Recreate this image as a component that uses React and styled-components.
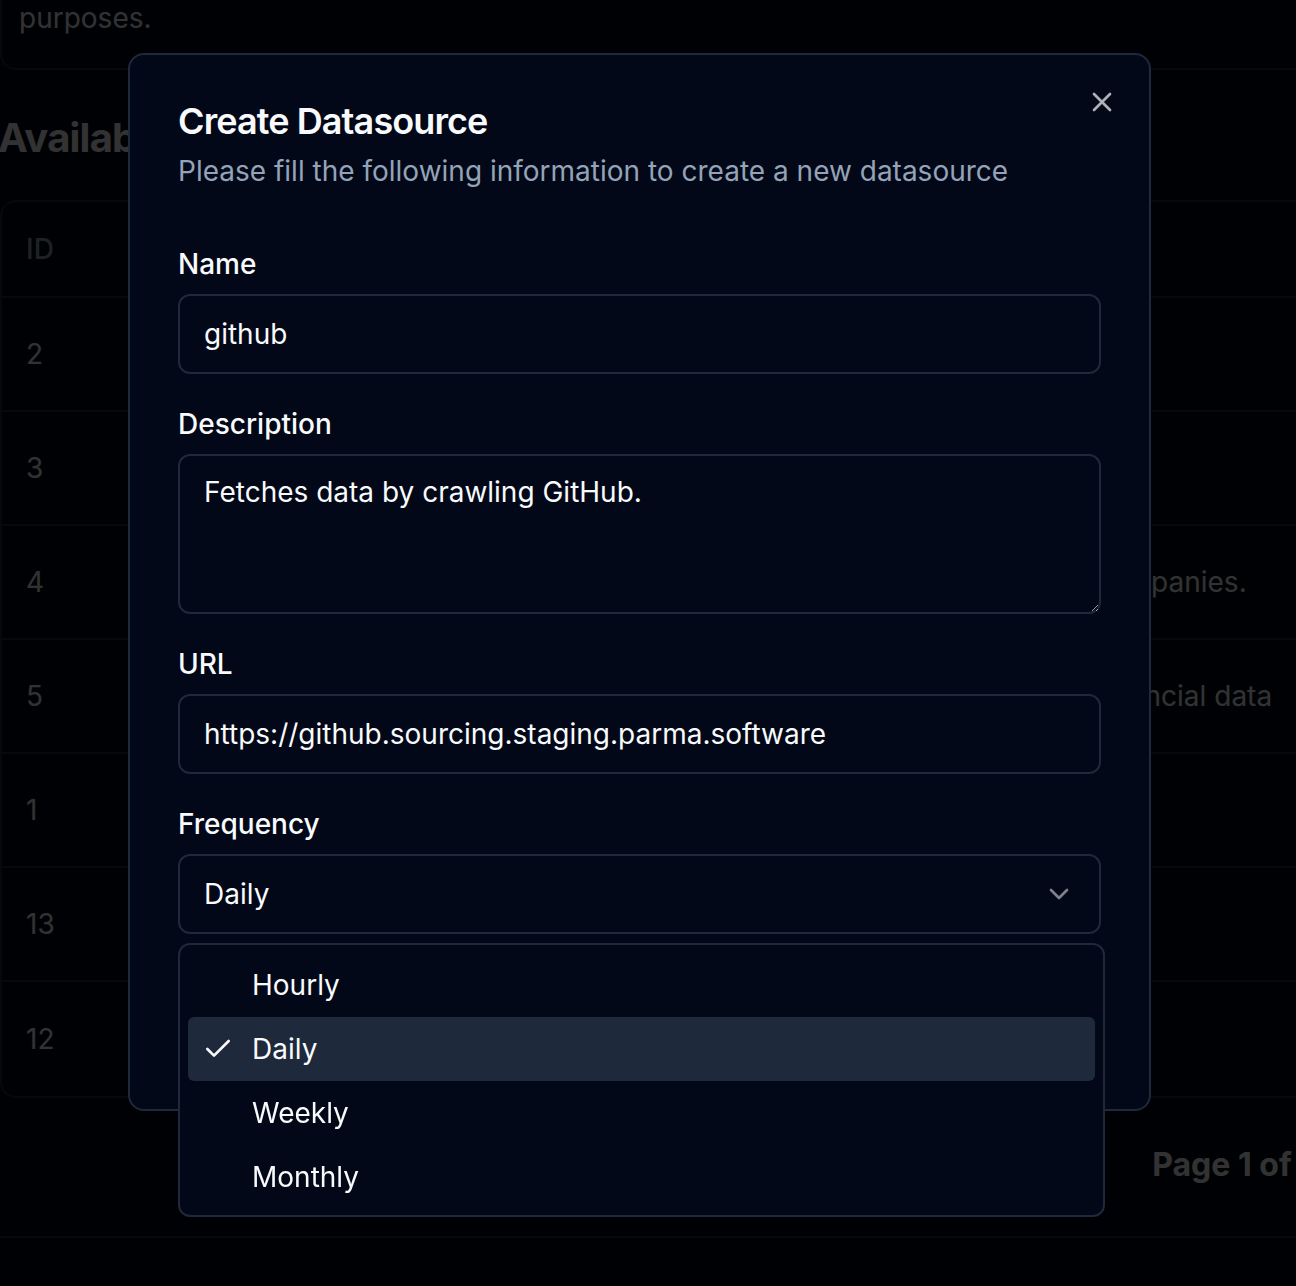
import React from "react";
import styled, { createGlobalStyle } from "styled-components";
import { X, ChevronDown, Check } from "lucide-react";

const colors = {
  background: "#020817",
  foreground: "#f8fafc",
  muted: "#94a3b8",
  border: "#1e293b",
  accent: "#1e293b",
};

const GlobalStyle = createGlobalStyle`
  html, body { margin: 0; padding: 0; }
  body {
    background: ${colors.background};
    color: ${colors.foreground};
    font-family: Inter, "Noto Sans", "Liberation Sans", sans-serif;
    overflow: hidden;
    height: 1286px;
  }
  * { box-sizing: border-box; }
`;

/* ---------- page behind the dialog ---------- */

const Page = styled.div`
  width: 1340px;
  display: flex;
  flex-direction: column;
`;

const TopCard = styled.div`
  margin-top: -44px;
  padding: 0 17px 30px;
  border: 2px solid ${colors.border};
  border-top-color: transparent;
  border-radius: 0 0 16px 16px;
  font-size: 28px;
  line-height: 40px;
`;

const Heading = styled.h2`
  margin: 48px 0 0 -2px;
  font-size: 40px;
  line-height: 40px;
  font-weight: 700;
  letter-spacing: -0.02em;
`;

const TableCard = styled.div`
  margin-top: 42px;
  border: 2px solid ${colors.border};
  border-radius: 16px;
`;

const Row = styled.div`
  display: grid;
  grid-template-columns: 200px 457px 1fr;
  align-items: center;
  height: ${(p) => (p.$header ? "96px" : "114px")};
  border-bottom: ${(p) => (p.$last ? "none" : `2px solid ${colors.border}`)};
  font-size: 28px;
  color: ${(p) => (p.$header ? colors.muted : colors.foreground)};
  font-weight: ${(p) => (p.$header ? 500 : 400)};
`;

const Cell = styled.div`
  padding-left: ${(p) => (p.$first ? "24px" : "0")};
  white-space: nowrap;
`;

const Pager = styled.div`
  margin-top: 47px;
  display: flex;
  justify-content: flex-end;
  padding-right: 27px;
  font-size: 32px;
  line-height: 40px;
  font-weight: 700;
`;

const BottomRule = styled.div`
  margin-top: 51px;
  border-top: 2px solid ${colors.border};
  height: 60px;
`;

/* ---------- overlay + dialog ---------- */

const Overlay = styled.div`
  position: fixed;
  inset: 0;
  background: rgba(0, 0, 0, 0.8);
  z-index: 10;
`;

const Dialog = styled.div`
  position: fixed;
  left: 128px;
  top: 53px;
  width: 1023px;
  z-index: 20;
  background: ${colors.background};
  border: 2px solid ${colors.border};
  border-radius: 16px;
  padding: 48px;
  display: flex;
  flex-direction: column;
`;

const CloseButton = styled.button`
  position: absolute;
  top: 31px;
  right: 31px;
  width: 32px;
  height: 32px;
  padding: 0;
  border: none;
  background: none;
  color: ${colors.foreground};
  opacity: 0.7;
  display: flex;
  align-items: center;
  justify-content: center;
`;

const Title = styled.h2`
  margin: 0;
  font-size: 36px;
  line-height: 36px;
  font-weight: 600;
  letter-spacing: -0.025em;
`;

const Subtitle = styled.p`
  margin: 12px 0 0;
  font-size: 28px;
  line-height: 40px;
  color: ${colors.muted};
`;

const Form = styled.form`
  margin-top: 59px;
  display: flex;
  flex-direction: column;
  gap: 36px;
`;

const Field = styled.div`
  position: relative;
  display: flex;
  flex-direction: column;
  gap: 16px;
`;

const Label = styled.label`
  font-size: 28px;
  line-height: 28px;
  font-weight: 500;
`;

const Input = styled.input`
  height: 80px;
  width: 100%;
  padding: 0 24px;
  border: 2px solid ${colors.border};
  border-radius: 12px;
  background: ${colors.background};
  color: ${colors.foreground};
  font: inherit;
  font-size: 28px;
  outline: none;
`;

const TextArea = styled.textarea`
  height: 160px;
  width: 100%;
  padding: 16px 24px;
  border: 2px solid ${colors.border};
  border-radius: 12px;
  background: ${colors.background};
  color: ${colors.foreground};
  font: inherit;
  font-size: 28px;
  line-height: 40px;
  outline: none;
  resize: vertical;
  color-scheme: dark;
`;

const SelectTrigger = styled.div`
  height: 80px;
  padding: 0 24px;
  border: 2px solid ${colors.border};
  border-radius: 12px;
  display: flex;
  align-items: center;
  justify-content: space-between;
  font-size: 28px;
  svg { opacity: 0.5; }
`;

const Menu = styled.div`
  position: absolute;
  top: calc(100% + 9px);
  left: 0;
  width: calc(100% + 4px);
  padding: 8px 8px 6px;
  border: 2px solid ${colors.border};
  border-radius: 12px;
  background: ${colors.background};
  z-index: 5;
  display: flex;
  flex-direction: column;
`;

const MenuItem = styled.div`
  position: relative;
  height: 64px;
  display: flex;
  align-items: center;
  padding-left: 64px;
  border-radius: 6px;
  font-size: 28px;
  background: ${(p) => (p.$active ? colors.accent : "transparent")};
`;

const CheckMark = styled.span`
  position: absolute;
  left: 14px;
  top: 16px;
  display: flex;
`;

const Footer = styled.div`
  margin-top: 47px;
  display: flex;
  justify-content: flex-end;
`;

const Button = styled.button`
  height: 80px;
  padding: 0 32px;
  border: none;
  border-radius: 12px;
  background: ${colors.foreground};
  color: ${colors.background};
  font: inherit;
  font-size: 28px;
  font-weight: 500;
`;

const rows = [
  { id: 2, name: "github", desc: "Fetches data by crawling GitHub." },
  { id: 3, name: "dummy", desc: "Dummy datasource." },
  { id: 4, name: "crunchbase", desc: "Fetches data about startups and companies." },
  { id: 5, name: "affinity", desc: "Fetches company info, including financial data" },
  { id: 1, name: "linkedin", desc: "Fetches profiles." },
  { id: 13, name: "producthunt", desc: "Fetches products." },
  { id: 12, name: "clearbit", desc: "Enriches data." },
];

const options = ["Hourly", "Daily", "Weekly", "Monthly"];

export default function App() {
  return (
    <>
      <GlobalStyle />
      <Page>
        <TopCard>
          <div>This datasource is only used for testing</div>
          <div>purposes.</div>
        </TopCard>
        <Heading>Available Datasources</Heading>
        <TableCard>
          <Row $header>
            <Cell $first>ID</Cell>
            <Cell>Name</Cell>
            <Cell>Description</Cell>
          </Row>
          {rows.map((r, i) => (
            <Row key={r.id} $last={i === rows.length - 1}>
              <Cell $first>{r.id}</Cell>
              <Cell>{r.name}</Cell>
              <Cell>{r.desc}</Cell>
            </Row>
          ))}
        </TableCard>
        <Pager>Page 1 of 1</Pager>
        <BottomRule />
      </Page>

      <Overlay />
      <Dialog>
        <CloseButton aria-label="Close">
          <X size={32} />
        </CloseButton>
        <Title>Create Datasource</Title>
        <Subtitle>Please fill the following information to create a new datasource</Subtitle>
        <Form onSubmit={(e) => e.preventDefault()}>
          <Field>
            <Label>Name</Label>
            <Input value="github" readOnly />
          </Field>
          <Field>
            <Label>Description</Label>
            <TextArea value="Fetches data by crawling GitHub." readOnly />
          </Field>
          <Field>
            <Label>URL</Label>
            <Input value="https://github.sourcing.staging.parma.software" readOnly />
          </Field>
          <Field>
            <Label>Frequency</Label>
            <SelectTrigger>
              <span>Daily</span>
              <ChevronDown size={32} />
            </SelectTrigger>
            <Menu>
              {options.map((o) => (
                <MenuItem key={o} $active={o === "Daily"}>
                  {o === "Daily" && (
                    <CheckMark>
                      <Check size={32} />
                    </CheckMark>
                  )}
                  {o}
                </MenuItem>
              ))}
            </Menu>
          </Field>
        </Form>
        <Footer>
          <Button type="submit">Submit</Button>
        </Footer>
      </Dialog>
    </>
  );
}
